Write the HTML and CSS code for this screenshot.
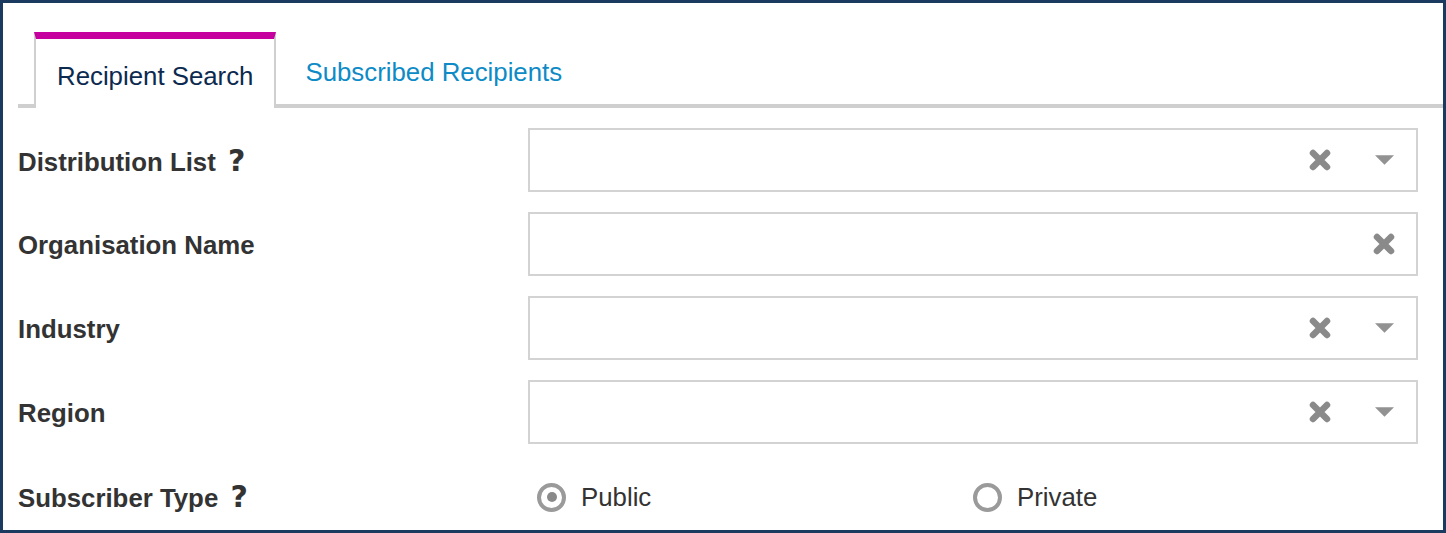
FILE: index.html
```html
<!DOCTYPE html>
<html>
<head>
  <meta charset="utf-8" />
  <title>Recipient Search</title>
  <link rel="stylesheet" href="styles.css">
</head>
<body>
  <div class="frame">
    <nav class="tabs">
      <a class="tab active" href="#">Recipient Search</a>
      <a class="tab" href="#">Subscribed Recipients</a>
    </nav>

    <form class="search">
      <label class="label">Distribution List <span class="help">?</span></label>
      <div class="field">
        <span class="slot"><svg class="clear" viewBox="0 0 22 22"><path d="M4 4L18 18M18 4L4 18" /></svg></span>
        <span class="slot"><svg class="caret" viewBox="0 0 20 10"><path d="M0 0H20L10 10Z" /></svg></span>
      </div>

      <label class="label">Organisation Name</label>
      <div class="field">
        <span class="slot"><svg class="clear" viewBox="0 0 22 22"><path d="M4 4L18 18M18 4L4 18" /></svg></span>
      </div>

      <label class="label">Industry</label>
      <div class="field">
        <span class="slot"><svg class="clear" viewBox="0 0 22 22"><path d="M4 4L18 18M18 4L4 18" /></svg></span>
        <span class="slot"><svg class="caret" viewBox="0 0 20 10"><path d="M0 0H20L10 10Z" /></svg></span>
      </div>

      <label class="label">Region</label>
      <div class="field">
        <span class="slot"><svg class="clear" viewBox="0 0 22 22"><path d="M4 4L18 18M18 4L4 18" /></svg></span>
        <span class="slot"><svg class="caret" viewBox="0 0 20 10"><path d="M0 0H20L10 10Z" /></svg></span>
      </div>

      <label class="label">Subscriber Type <span class="help">?</span></label>
      <div class="radios">
        <label class="radio"><span class="dot checked"></span>Public</label>
        <label class="radio"><span class="dot"></span>Private</label>
      </div>
    </form>
  </div>
</body>
</html>
```

FILE: styles.css
```css
* {
  box-sizing: border-box;
}
body {
  margin: 0;
  font: 25.8px/30px 'Liberation Sans', Arial, sans-serif;
  color: #333;
  background: #fff;
}
a {
  text-decoration: none;
}

.frame {
  height: 533px;
  padding: 29px 0 0 15px;
  border: 3px solid #1a3a5f;
  overflow: hidden;
}

/* tabs */
.tabs {
  display: flex;
  align-items: flex-start;
  border-bottom: 4px solid #cfcfcf;
}
.tab {
  display: block;
  padding: 25px 0 0 29px;
  color: #0e8bc6;
}
.tab.active {
  margin: 0 0 -4px 16px;
  padding: 22px 21px 17px;
  color: #0c2a4f;
  background: #fff;
  border: 2px solid #cfcfcf;
  border-top: 7px solid #c6009f;
  border-bottom: none;
}

/* form */
.search {
  display: grid;
  grid-template-columns: 510px 1fr;
  grid-auto-rows: 64px;
  row-gap: 20px;
  align-items: center;
  margin: 20px 25px 0 0;
}
.label {
  padding-top: 2px;
  font-weight: bold;
  color: #333;
}
.help {
  margin-left: 5px;
  font: bold 30px/30px 'DejaVu Sans', sans-serif;
  color: #333;
}
.field {
  display: flex;
  justify-content: flex-end;
  align-items: center;
  height: 64px;
  border: 2px solid #d3d3d3;
}
.slot {
  display: flex;
  justify-content: center;
  align-items: center;
  width: 64px;
  height: 100%;
}
.clear {
  width: 22px;
  height: 22px;
  stroke: #8a8a8a;
  stroke-width: 6.5;
  stroke-linecap: round;
  fill: none;
}
.caret {
  width: 19px;
  height: 10px;
  fill: #929292;
}

.radios {
  display: grid;
  grid-template-columns: 436px 1fr;
  padding: 2px 0 0 9px;
}
.radio {
  display: flex;
  align-items: center;
  gap: 15px;
  color: #333;
}
.dot {
  display: flex;
  justify-content: center;
  align-items: center;
  width: 29px;
  height: 29px;
  border: 4px solid #9a9a9a;
  border-radius: 50%;
}
.dot.checked::after {
  content: "";
  width: 10px;
  height: 10px;
  border-radius: 50%;
  background: #8a8a8a;
}
```
